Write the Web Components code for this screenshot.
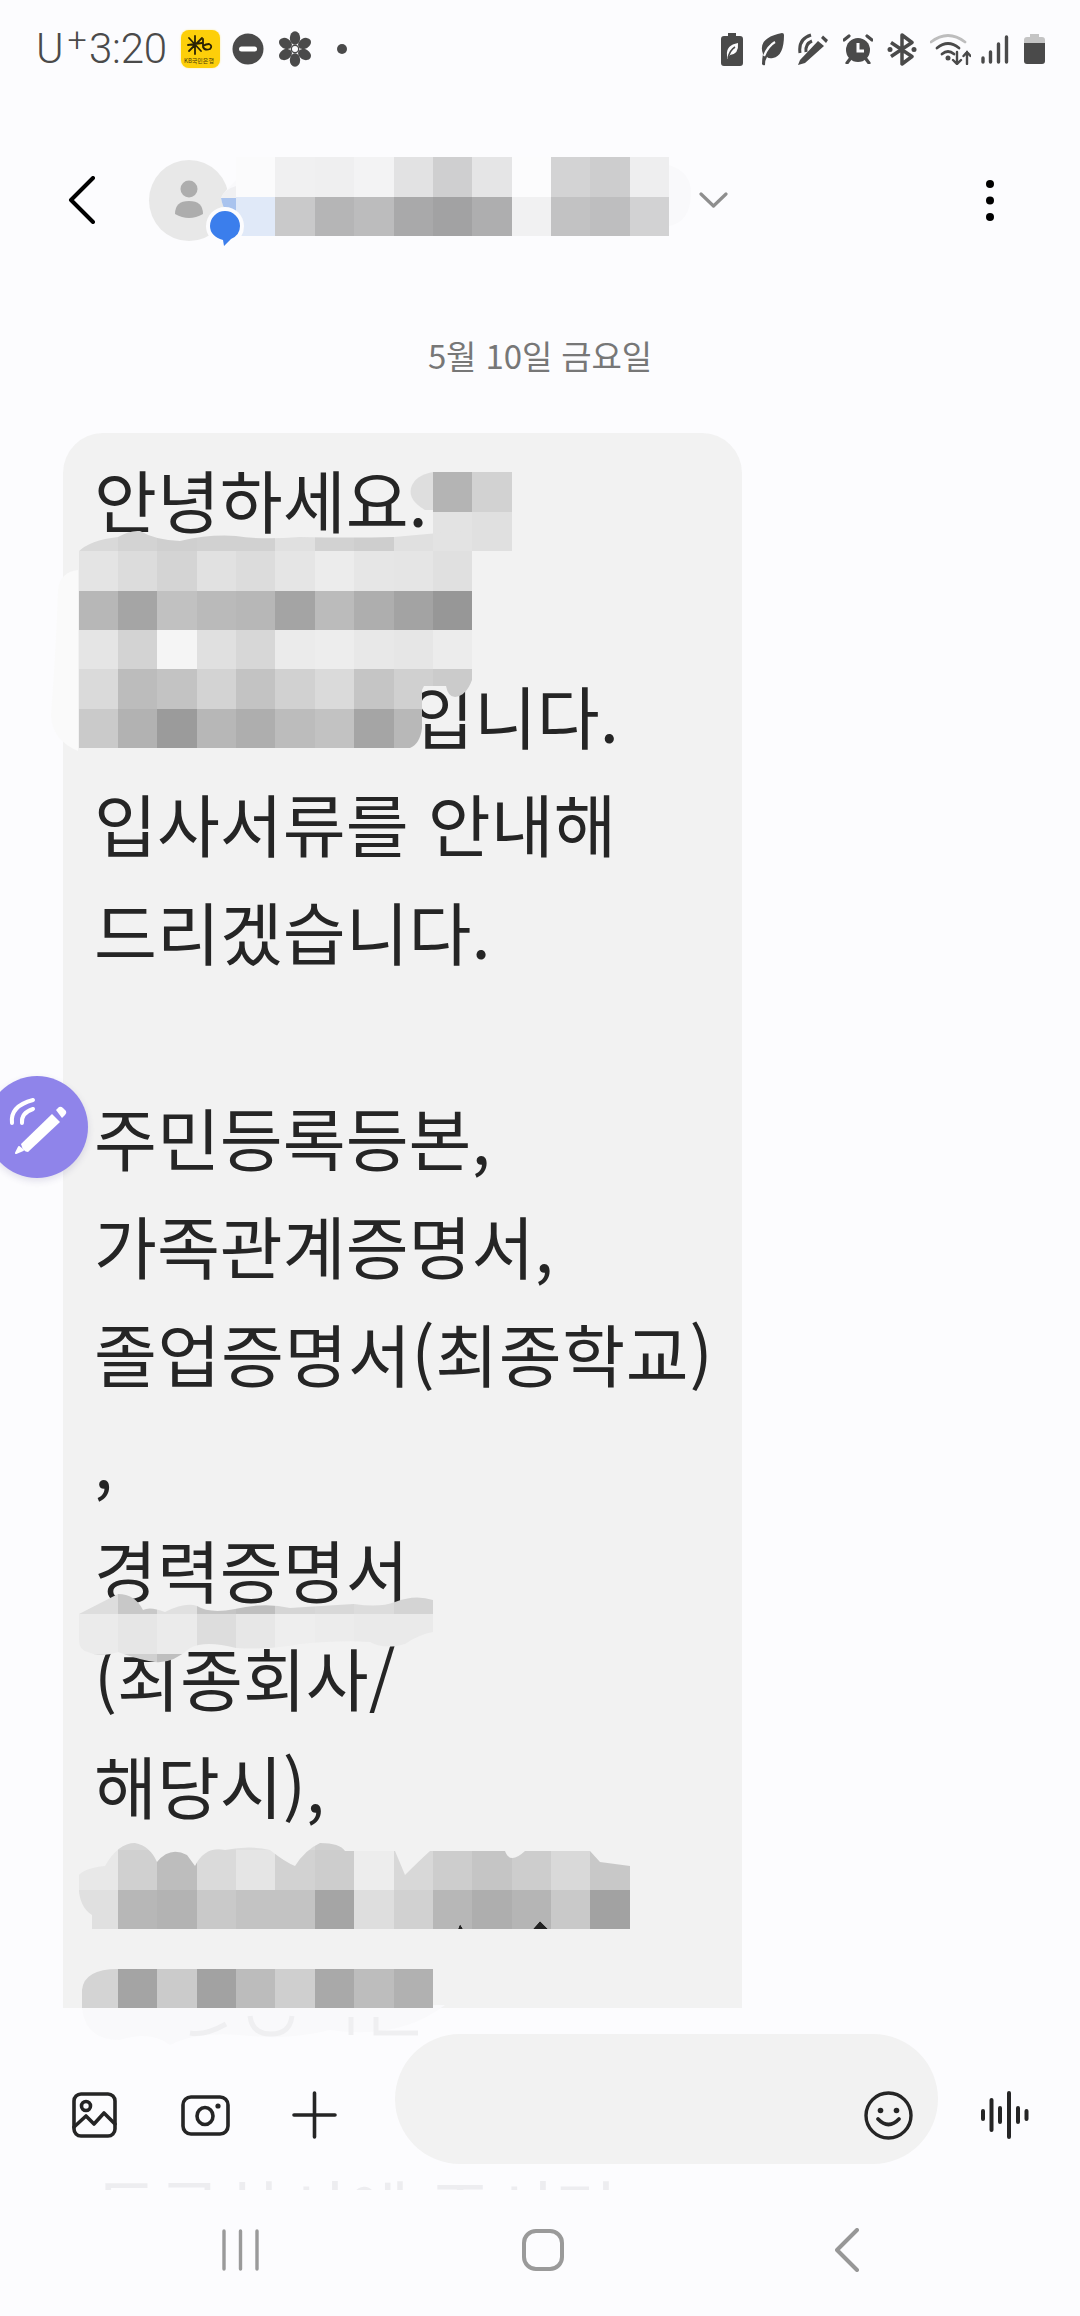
<!DOCTYPE html>
<html lang="ko"><head><meta charset="utf-8"><title>메시지</title>
<style>
html,body{margin:0;padding:0;background:#fcfcfe}
body{width:1080px;height:2316px;overflow:hidden;font-family:"Noto Sans CJK KR","Noto Sans",sans-serif}
.l{height:108px;line-height:108px;white-space:nowrap}
.gap{height:98px}
.after-mosaic{padding-left:317px}
.wide{letter-spacing:.6px}
</style></head><body>
<x-phone>
  <x-status-bar></x-status-bar>
  <x-app-header></x-app-header>
  <x-thread>
    <x-date-chip>5월 10일 금요일</x-date-chip>
    <x-bubble>
      <div class="l">안녕하세요.</div>
      <div class="l"></div>
      <div class="l after-mosaic">입니다.</div>
      <div class="l">입사서류를 안내해</div>
      <div class="l">드리겠습니다.</div>
      <div class="gap"></div>
      <div class="l">주민등록등본,</div>
      <div class="l">가족관계증명서,</div>
      <div class="l wide">졸업증명서(최종학교)</div>
      <div class="l">,</div>
      <div class="l">경력증명서</div>
      <div class="l">(최종회사/</div>
      <div class="l">해당시),</div>
    </x-bubble>
  </x-thread>
  <x-composer></x-composer>
  <x-ghost-line>등록하시에 주시면</x-ghost-line>
  <x-nav-bar></x-nav-bar>

  <x-redaction col="6" row="4" colors="fbfbfc f0f0f1 efeff0 f3f3f4 e2e2e3 cfcfd0 e5e5e6 fcfcfd d3d3d4 cdcdce eeeeef|e0e9f8 c9c9ca b5b5b6 bcbcbd a9a9aa a2a2a3 aeaeaf f1f1f2 c2c2c3 bebebf d2d2d3"
    smear="M221 198Q228 184 262 160L276 157V236H240L236 218Q224 214 221 198ZM669 165Q692 172 691 195Q690 222 669 226Z" smear-fill="#f9f9fb"></x-redaction>
  <x-redaction extra="M221 198Q223 190 236 186V198Z" extra-fill="#f0f0f2"></x-redaction>
  <x-redaction extra="M221 198H236V218Q224 215 221 198Z" extra-fill="#a9c3ee"></x-redaction>

  <x-redaction col="11" row="12" colors="b4b4b4 d2d2d2|e3e3e3 e0e0e0" smear="M433 472V510H425Q408 500 411 488Q415 475 433 472Z" smear-fill="#dedede"></x-redaction>
  <x-redaction col="2" row="13" colors="d9d9d9 d3d3d3 cfcfcf d1d1d1 d1d1d1 e0e0e0 d2d2d2 cecece e0e0e0 e3e3e3|e4e4e4 dcdcdc d4d4d4 e1e1e1 dcdcdc e5e5e5 ececec e6e6e6 e5e5e5 e0e0e0|b7b7b7 a5a5a5 c1c1c1 bababa b7b7b7 a4a4a4 bbbbbb aeaeae a3a3a3 979797|e5e5e5 d3d3d3 f5f5f5 e0e0e0 d7d7d7 ebebeb ededed e8e8e8 e6e6e6 ececec|dadada bcbcbc c3c3c3 d3d3d3 c3c3c3 d1d1d1 dadada c5c5c5 d0d0d0 cbcbcb|cacaca b2b2b2 9b9b9b b7b7b7 aeaeae bcbcbc c2c2c2 a5a5a5 b8b8b8 -"
    clip="M78 552Q90 540 118 537Q130 530 140 531Q155 540 180 541Q210 534 236 536Q260 540 300 537Q350 538 394 537L472 530V680Q466 696 455 697Q448 697 446 686H424L422 690V728Q420 744 410 748H78Z"
    smear="M78 570Q60 572 58 590Q56 650 51 715Q52 740 78 751Z" smear-fill="#fafafa"></x-redaction>

  <x-redaction col="2" row="40" colors="dddddd c8c8c8 e0e0e0 c5c5c5 bfbfbf d5d5d5 d8d8d8 dcdcdc d4d4d4|ebebeb e6e6e6 ebebeb dddddd e7e7e7 eeeeee ececec eaeaea eaeaea|dddddd d0d0d0 bfbfbf - - - - - -"
    clip="M79 1640L79 1614L118 1594Q135 1594 143 1610Q150 1606 165 1612Q185 1602 197 1606Q210 1614 235 1609Q265 1602 290 1608Q320 1606 354 1604Q380 1608 395 1602Q415 1594 433 1600V1632Q420 1634 405 1644Q385 1650 370 1642Q340 1640 300 1644Q270 1650 236 1648Q205 1640 190 1648Q172 1664 155 1662Q140 1660 118 1652Q100 1658 88 1652Q79 1650 79 1640Z"></x-redaction>

  <x-redaction extra="M533 1929L540 1921L548 1929ZM458 1929L460 1924L463 1929Z" extra-fill="#222"></x-redaction>
  <x-redaction col="2" row="46" colors="e8e8e8 d6d6d6 c8c8c8 dcdcdc e0e0e0 d8d8d8 d0d0d0 e4e4e4 - - - - - -|e8e8e8 d0d0d0 bdbdbd dadada e5e5e5 d2d2d2 cdcdcd ededed d8d8d8 cdcdcd c5c5c5 cdcdcd d9d9d9 c8c8c8|e0e0e0 b7b7b7 b3b3b3 c9c9c9 c3c3c3 c3c3c3 a5a5a5 dedede d1d1d1 b7b7b7 aeaeae b5b5b5 c9c9c9 a2a2a2"
    clip="M92 1929V1915Q76 1905 79 1875Q85 1868 105 1866Q118 1843 135 1843Q150 1846 157 1862Q170 1846 187 1855L195 1866Q205 1846 225 1850Q250 1845 270 1850Q285 1862 295 1866Q305 1850 320 1843Q340 1843 345 1851H395Q403 1870 405 1875Q420 1860 430 1851H505Q510 1865 525 1851H590L600 1862L630 1866V1929H548L540 1921L533 1929H463L460 1924L458 1929Z"></x-redaction>

  <x-redaction extra="M82 2008Q85 2040 120 2040Q150 2030 170 2045Q200 2030 250 2036Q290 2040 330 2030Q400 2040 445 2005Z" extra-fill="#f9f9fb"></x-redaction>
  <x-redaction stroke="M250 2016Q252 2034 271 2034Q290 2034 292 2016M351 2017V2035M376 2017V2033H418M190 2033Q205 2036 226 2024" stroke-color="#efeff1"></x-redaction>
  <x-redaction col="2" row="50" colors="d4d4d4 a4a4a4 cbcbcb a2a2a2 bcbcbc cfcfcf a9a9a9 bdbdbd b1b1b1" clip="M82 1990Q84 1969 118 1969H433V2008H82Z"></x-redaction>

  <x-contact-badge></x-contact-badge>
  <x-fab></x-fab>
</x-phone>

<script>
const def=(name,css,html)=>customElements.define(name,class extends HTMLElement{
  constructor(){super();this.attachShadow({mode:'open'}).innerHTML=`<style>${css}</style>${html}`;}
});

def('x-phone',`:host{display:flex;flex-direction:column;position:relative;width:1080px;height:2316px;overflow:hidden;background:#fcfcfe;color:#252525}`,`<slot></slot>`);

const ink='#4a4a4a';
def('x-status-bar',`
:host{display:flex;align-items:center;justify-content:space-between;height:102px;padding:0 35px 4px 36px;box-sizing:border-box;flex:none;color:${ink};font-family:Roboto,sans-serif}
.left,.right{display:flex;align-items:center}
.t{font-size:42px;font-weight:300;line-height:40px;letter-spacing:-.2px;display:block}
.u{width:53px;white-space:nowrap}
sup{font-size:34px;line-height:0;vertical-align:12px;margin-left:4px}
.time{width:92px}
.kb{position:relative;width:39px;height:38px;border-radius:8px;background:#fdcf0a;overflow:hidden;box-shadow:0 0 2px #fde98a}
.kb small{position:absolute;left:3px;right:0;bottom:4px;font:6px/7px "Noto Sans CJK KR",sans-serif;color:#4a3a05;white-space:nowrap}
svg{display:block}
`,`<div class="left">
<span class="t u">U<sup>+</sup></span><span class="t time">3:20</span>
<span class="kb"><svg width="39" height="26" viewBox="0 0 39 26" fill="none" stroke="#2a2205" stroke-width="1.8" stroke-linecap="round"><path d="M14 6V24M7 15L21 13M8 8L20 21M21 8L8 21"/><path d="M22 9V17Q24 21 29 19Q32 16 28 14Q25 14 22 16"/></svg><small>KB국민은행</small></span>
<svg style="margin-left:12px" width="32" height="32" viewBox="0 0 32 32"><circle cx="16" cy="16" r="15.5" fill="${ink}"/><rect x="7" y="13.5" width="18" height="5" rx="2.5" fill="#fff"/></svg>
<svg style="margin-left:13px" width="36" height="36" viewBox="-18 -18 36 36" fill="${ink}">${[0,60,120,180,240,300].map(a=>`<ellipse cx="0" cy="-11" rx="5.2" ry="6.8" transform="rotate(${a})"/>`).join('')}<circle r="4.4" fill="${ink}"/><circle r="3" fill="#fcfcfe"/></svg>
<svg style="margin-left:24px" width="10" height="10"><circle cx="5" cy="5" r="5" fill="${ink}"/></svg>
</div>
<div class="right">
<svg width="22" height="33" viewBox="0 0 22 33"><path d="M7 0H15V3H19Q22 3 22 6V30Q22 33 19 33H3Q0 33 0 30V6Q0 3 3 3H7Z" fill="${ink}"/><path d="M6 22Q5 12 17 10Q18 21 9 22L6 26Z" fill="#fcfcfe"/><path d="M7 25Q9 17 14 14" stroke="${ink}" stroke-width="1.5" fill="none"/></svg>
<svg style="margin-left:17px" width="24" height="33" viewBox="0 0 24 33"><path d="M22 0Q24 0 24 2Q24 23 13 25Q9 26 7 24Q5 27 5 32Q3 33 2 31Q2 26 3 21Q-3 5 22 0Z" fill="${ink}"/><path d="M15 9Q8 13 4 23" stroke="#fcfcfe" stroke-width="2.200" fill="none"/></svg>
<svg style="margin-left:13px" width="32" height="32" viewBox="0 0 32 32" fill="none" stroke="${ink}"><path d="M1 32L3 27L21 8L27 13L8 30Z" fill="${ink}" stroke="none"/><path d="M24 5L26 2.500L31 7L29 10Z" fill="${ink}" stroke="none"/><path d="M3 20Q1 6 14 2" stroke-width="3"/><path d="M9 19Q8 11 15 8" stroke-width="3"/></svg>
<svg style="margin-left:14px" width="30" height="30" viewBox="0 0 30 30"><circle cx="15" cy="16" r="12" fill="${ink}"/><path d="M15 9V17H21" stroke="#fcfcfe" stroke-width="3" fill="none"/><path d="M1 6L6 2M29 6L24 2M4 29L7 25M26 29L23 25" stroke="${ink}" stroke-width="3.200" stroke-linecap="round"/></svg>
<svg style="margin-left:14px" width="30" height="33" viewBox="0 0 30 33" fill="none" stroke="${ink}" stroke-width="3.500" stroke-linejoin="round"><path d="M4 9.500L25 23.500L15 31V2L25 9.500L4 23.500"/><circle cx="3" cy="16.500" r="2.500" fill="${ink}" stroke="none"/><circle cx="27" cy="16.500" r="2.500" fill="${ink}" stroke="none"/></svg>
<svg style="margin-left:13px" width="41" height="32" viewBox="0 0 41 32" fill="none" stroke-linecap="round"><path d="M1 9Q18 -4 35 9" stroke="#bdbdbd" stroke-width="2.800"/><path d="M7 15Q18 6 29 15" stroke="${ink}" stroke-width="2.800"/><path d="M12 21Q18 16 24 21" stroke="${ink}" stroke-width="2.800"/><circle cx="18" cy="25" r="2.500" fill="${ink}"/><path d="M27 19V31M23 27L27 31L31 27M37 31V19M33.500 23L37 19L40.500 23" stroke="${ink}" stroke-width="2.400"/></svg>
<svg style="margin-left:10px" width="28" height="29" viewBox="0 0 28 29" stroke="${ink}" stroke-width="3.400" stroke-linecap="round"><path d="M2 23V27M9.500 17V27M17.500 9V27M25.500 2V27"/></svg>
<svg style="margin-left:15px" width="21" height="30" viewBox="0 0 21 30"><path d="M6 0H15V3H18Q21 3 21 6V11H0V6Q0 3 3 3H6Z" fill="#c4c4c4"/><path d="M0 9H21V27Q21 30 18 30H3Q0 30 0 27Z" fill="${ink}"/></svg>
</div>`);

def('x-app-header',`
:host{display:flex;align-items:center;height:212px;flex:none;padding:0 0 16px 67px;box-sizing:border-box;position:relative}
svg{display:block;flex:none}
.av{width:80px;height:81px;border-radius:50%;background:#e8e8e8;margin-left:52px;display:flex;align-items:center;justify-content:center}
.sp{flex:none;width:470px}
`,`
<svg width="30" height="48" viewBox="0 0 30 48" fill="none" stroke="#000" stroke-width="4" stroke-linecap="round" stroke-linejoin="round"><path d="M26 2L4 24L26 46"/></svg>
<div class="av"><svg width="30" height="40" viewBox="0 0 30 40" fill="#adadad"><circle cx="15" cy="9" r="8.500"/><path d="M1 34Q1 21 15 21Q29 21 29 34Q15 42 1 34Z"/></svg></div>
<div class="sp"></div>
<svg width="29" height="16" viewBox="0 0 29 16" fill="none" stroke="#8e8e8e" stroke-width="3.200" stroke-linecap="round" stroke-linejoin="round"><path d="M2 2L14.500 14L27 2"/></svg>
<svg style="margin-left:258px" width="8" height="41" viewBox="0 0 8 41" fill="#000"><circle cx="4" cy="4" r="4"/><circle cx="4" cy="20.500" r="4"/><circle cx="4" cy="37" r="4"/></svg>
`);

def('x-thread',`:host{display:flex;flex-direction:column;flex:none;height:1694px;overflow:hidden;position:relative}`,`<slot></slot>`);
def('x-date-chip',`:host{display:block;flex:none;text-align:center;font-size:33px;line-height:82px;height:84px;color:#777;letter-spacing:-.1px}`,`<slot></slot>`);
def('x-bubble',`:host{display:block;flex:none;margin:35px 0 0 63px;width:679px;height:1900px;box-sizing:border-box;padding:12px 0 0 31px;background:#f2f2f2;border-radius:40px;font-size:68.4px;color:#252525}`,`<slot></slot>`);

def('x-composer',`
:host{display:flex;align-items:flex-end;flex:none;height:156px;box-sizing:border-box;padding:26px 0 0 72px}
svg{display:block;flex:none;margin-bottom:25px}
.pill{flex:none;width:543px;height:130px;border-radius:65px;background:#f2f2f2;margin-left:58px;display:flex;justify-content:flex-end;align-items:flex-end}
.pill svg{margin:0 25px 24px 0}
`,`
<svg width="45" height="48" viewBox="0 0 45 48" fill="none" stroke="#252525" stroke-width="3.600" stroke-linejoin="round" stroke-linecap="round"><rect x="2" y="3" width="41" height="42" rx="7"/><circle cx="14" cy="15" r="4.500"/><path d="M2 36L14 25L22 33L32 22L43 33"/></svg>
<svg style="margin-left:64px" width="49" height="48" viewBox="0 0 49 48" fill="none" stroke="#252525" stroke-width="3.600"><rect x="2" y="6" width="45" height="37" rx="8"/><ellipse cx="24" cy="25" rx="8" ry="8.500"/><circle cx="37" cy="15" r="2.600" fill="#252525" stroke="none"/></svg>
<svg style="margin-left:62px" width="45" height="48" viewBox="0 0 45 48" fill="none" stroke="#252525" stroke-width="3.600" stroke-linecap="round"><path d="M22.500 2V46M2 24H43"/></svg>
<div class="pill"><svg width="49" height="49" viewBox="0 0 49 49" fill="none" stroke="#252525" stroke-width="3.400" stroke-linecap="round"><circle cx="24.500" cy="24.500" r="22.500"/><circle cx="16.500" cy="19.500" r="2.800" fill="#252525" stroke="none"/><circle cx="32.500" cy="19.500" r="2.800" fill="#252525" stroke="none"/><path d="M14 28Q24.500 39 35 28" stroke-width="3.800"/></svg></div>
<svg style="margin-left:43px" width="48" height="48" viewBox="0 0 48 48" stroke="#252525" stroke-width="4" stroke-linecap="round"><path d="M2 20V28M10.500 9V39M19 17V31M28 2V46M37 17V31M45.500 20V28"/></svg>
`);

def('x-ghost-line',`:host{display:block;flex:none;height:26px;overflow:hidden;box-sizing:border-box;padding-left:95px;font-size:68.4px;line-height:108px;color:#ededf0;white-space:nowrap}
span{display:block;margin-top:-9px}`,`<span><slot></slot></span>`);

def('x-nav-bar',`
:host{display:flex;align-items:center;flex:none;height:128px;box-sizing:border-box;padding:0 0 8px 222px}
svg{display:block;flex:none}
`,`
<svg width="37" height="42" viewBox="0 0 37 42" stroke="#9a9a9a" stroke-width="3.400" stroke-linecap="round"><path d="M2 2V40M18.500 2V40M35 2V40"/></svg>
<svg style="margin-left:263px" width="42" height="42" viewBox="0 0 42 42" fill="none" stroke="#9a9a9a" stroke-width="4"><rect x="2" y="2" width="38" height="38" rx="12"/></svg>
<svg style="margin-left:271px" width="24" height="44" viewBox="0 0 24 44" fill="none" stroke="#979797" stroke-width="4" stroke-linecap="round" stroke-linejoin="round"><path d="M22 2L2 22L22 42"/></svg>
`);

const CX=39.35,CY=39.37;
customElements.define('x-redaction',class extends HTMLElement{
  constructor(){super();this.attachShadow({mode:'open'});}
  connectedCallback(){
    const g=n=>this.getAttribute(n),col=+g('col'),row=+g('row');
    const id='c'+Math.random().toString(36).slice(2);
    let rects='';
    if(g('colors')) g('colors').split('|').forEach((line,r)=>line.trim().split(/\s+/).forEach((c,i)=>{
      if(c==='-')return;
      const x=Math.round((col+i)*CX),x2=Math.round((col+i+1)*CX),y=Math.round((row+r)*CY),y2=Math.round((row+r+1)*CY);
      rects+=`<rect x="${x}" y="${y}" width="${x2-x}" height="${y2-y}" fill="#${c}"/>`;
    }));
    this.shadowRoot.innerHTML=`<style>:host{position:absolute;left:0;top:0;width:1080px;height:2316px;pointer-events:none}svg{display:block}</style>
    <svg width="1080" height="2316" viewBox="0 0 1080 2316">
      ${g('clip')?`<clipPath id="${id}"><path d="${g('clip')}"/></clipPath>`:''}
      ${g('smear')?`<path d="${g('smear')}" fill="${g('smear-fill')}"/>`:''}
      ${g('extra')?`<path d="${g('extra')}" fill="${g('extra-fill')}"/>`:''}
      ${g('stroke')?`<path d="${g('stroke')}" fill="none" stroke-width="5" stroke="${g('stroke-color')}"/>`:''}
      <g ${g('clip')?`clip-path="url(#${id})"`:''}>${rects}</g>
    </svg>`;
  }
});

def('x-contact-badge',`:host{position:absolute;left:205px;top:206px;width:40px;height:44px}svg{display:block}`,
`<svg width="40" height="44" viewBox="0 0 40 44"><path d="M1 20A19 19 0 0 1 39 20Q39 32 28 37L18 44L16 38Q1 33 1 20Z" fill="#fcfcfe"/><path d="M5 20A15 15 0 0 1 35 20Q35 29 26 33L19 40L18 34Q5 30 5 20Z" fill="#3b7eec"/></svg>`);

def('x-fab',`:host{position:absolute;left:-14px;top:1076px;width:102px;height:102px;border-radius:50%;background:#8f84ea;box-shadow:0 3px 7px rgba(60,50,120,.14)}svg{display:block}`,
`<svg width="102" height="102" viewBox="0 0 102 102" fill="none"><path d="M30 77L33 71L37 74Z" fill="#fff" stroke="#fff" stroke-width="2" stroke-linejoin="round"/><path d="M35 68L66 38L74 46L42 76Q37 76 35 68Z" fill="#fff"/><path d="M70 34L73 31Q75 30 77 32L80 35Q81 37 79 39L76 42Z" fill="#fff"/><path d="M26 47Q24 30 47 24" stroke="#fff" stroke-width="4" stroke-linecap="round"/><path d="M36 47Q35 37 47 33" stroke="#fff" stroke-width="4" stroke-linecap="round"/></svg>`);
</script>
</body></html>
